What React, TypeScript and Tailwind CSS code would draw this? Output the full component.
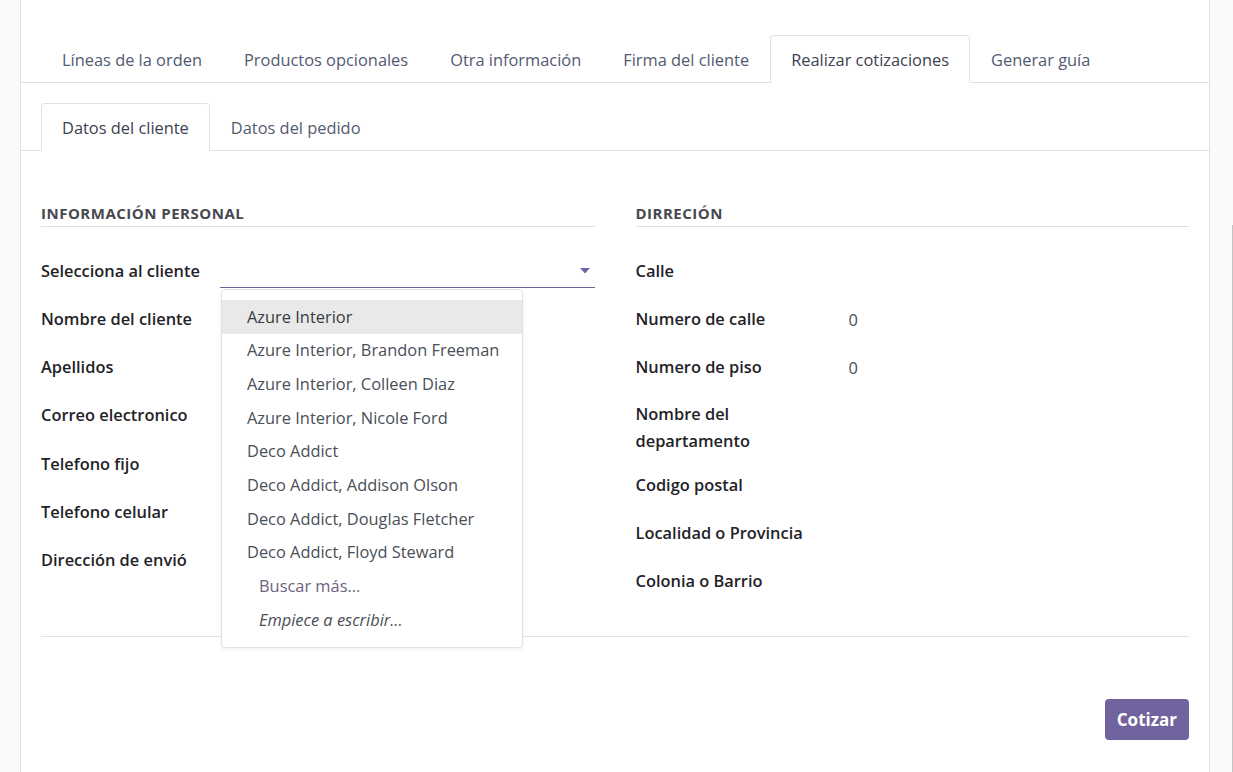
import { useState } from "react";

const topTabs = [
  "Líneas de la orden",
  "Productos opcionales",
  "Otra información",
  "Firma del cliente",
  "Realizar cotizaciones",
  "Generar guía",
];

const clientes = [
  "Azure Interior",
  "Azure Interior, Brandon Freeman",
  "Azure Interior, Colleen Diaz",
  "Azure Interior, Nicole Ford",
  "Deco Addict",
  "Deco Addict, Addison Olson",
  "Deco Addict, Douglas Fletcher",
  "Deco Addict, Floyd Steward",
];

const personales = [
  "Nombre del cliente",
  "Apellidos",
  "Correo electronico",
  "Telefono fijo",
  "Telefono celular",
  "Dirección de envió",
];

function Label({ children }: { children: React.ReactNode }) {
  return <span className="font-semibold text-[#1f2328] leading-[27px]">{children}</span>;
}

export default function App() {
  const [activeTop] = useState(4);

  return (
    <div
      className="flex h-[772px] w-full overflow-hidden bg-[#f9fafb] text-[16.4px]"
      style={{ fontFamily: "'Open Sans', 'Noto Sans', sans-serif" }}
    >
      <div className="w-[20px] shrink-0" />

      <div className="flex w-[1190px] shrink-0 flex-col border-x border-[#dee2e6] bg-white pt-[35px]">
        {/* pestañas principales */}
        <ul className="flex border-b border-[#dee2e6] pl-[20px]">
          {topTabs.map((t, i) => (
            <li
              key={t}
              className={
                i === activeTop
                  ? "-mb-px flex h-[48px] items-center rounded-t-[4px] border border-[#dee2e6] border-b-white bg-white px-[20px] pt-[2px] text-[#3d4250]"
                  : "flex h-[47px] items-center border border-transparent px-[20px] pt-[3px] text-[#535a72]"
              }
            >
              {t}
            </li>
          ))}
        </ul>

        {/* sub pestañas */}
        <ul className="mt-[20px] flex border-b border-[#dee2e6] pl-[20px]">
          <li className="-mb-px flex h-[48px] items-center rounded-t-[4px] border border-[#dee2e6] border-b-white bg-white px-[20px] pt-[2px] text-[#3d4250]">
            Datos del cliente
          </li>
          <li className="flex h-[47px] items-center border border-transparent px-[20px] pt-[3px] text-[#535a72]">
            Datos del pedido
          </li>
        </ul>

        <div className="px-[20px] pt-[51px]">
          <div className="grid grid-cols-2 gap-[41px]">
            {/* columna izquierda */}
            <div>
              <h3 className="border-b border-[#dee2e6] pb-[2px] text-[15px] font-bold uppercase leading-[22px] tracking-[0.5px] text-[#46494f]">
                Información personal
              </h3>
              <div className="pt-[19px]">
                <div className="flex h-[48px] items-center">
                  <div className="w-[179px] shrink-0">
                    <Label>Selecciona al cliente</Label>
                  </div>
                  <div className="relative flex-1 self-start">
                    <div className="flex h-[42px] items-center justify-end border-b border-[#71639e] pr-[5px]">
                      <svg width="10" height="6" viewBox="0 0 10 6" className="mt-[8px]">
                        <path d="M0 0h10L5 5.5z" fill="#71639e" />
                      </svg>
                    </div>
                    <ul className="absolute left-px top-[43px] z-10 w-[302px] rounded-[4px] border border-[#dee2e6] bg-white py-[10px] text-[#4a4f57] shadow-[0_2px_4px_rgba(0,0,0,0.06)]">
                      {clientes.map((c, i) => (
                        <li
                          key={c}
                          className={
                            "flex h-[33.7px] items-center pl-[25px] " + (i === 0 ? "bg-[#e9e9e9] text-[#373b42]" : "")
                          }
                        >
                          {c}
                        </li>
                      ))}
                      <li className="flex h-[33.7px] items-center pl-[37px] text-[#6f6282]">Buscar más...</li>
                      <li className="flex h-[33.7px] items-center pl-[37px] italic text-[#4a4f57]">
                        Empiece a escribir...
                      </li>
                    </ul>
                  </div>
                </div>
                {personales.map((p) => (
                  <div key={p} className="flex h-[48.3px] items-center">
                    <Label>{p}</Label>
                  </div>
                ))}
              </div>
            </div>

            {/* columna derecha */}
            <div>
              <h3 className="border-b border-[#dee2e6] pb-[2px] text-[15px] font-bold uppercase leading-[22px] tracking-[0.5px] text-[#46494f]">
                Dirreción
              </h3>
              <div className="pt-[19px]">
                <div className="flex h-[48px] items-center">
                  <Label>Calle</Label>
                </div>
                <div className="flex h-[48px] items-center">
                  <div className="w-[213px]">
                    <Label>Numero de calle</Label>
                  </div>
                  <span className="mt-[4px] text-[#4a4f57]">0</span>
                </div>
                <div className="flex h-[48px] items-center">
                  <div className="w-[213px]">
                    <Label>Numero de piso</Label>
                  </div>
                  <span className="mt-[4px] text-[#4a4f57]">0</span>
                </div>
                <div className="flex h-[70px] items-start pt-[10px]">
                  <div className="w-[140px]">
                    <Label>Nombre del departamento</Label>
                  </div>
                </div>
                <div className="flex h-[48px] items-center">
                  <Label>Codigo postal</Label>
                </div>
                <div className="flex h-[48px] items-center">
                  <Label>Localidad o Provincia</Label>
                </div>
                <div className="flex h-[48px] items-center">
                  <Label>Colonia o Barrio</Label>
                </div>
              </div>
            </div>
          </div>

          <div className="mt-[32px] border-t border-[#dee2e6]" />

          <div className="mt-[62px] flex justify-end">
            <button className="h-[41px] rounded-[4px] bg-[#71639e] px-[12px] text-[17px] font-bold text-white">
              Cotizar
            </button>
          </div>
        </div>
      </div>

      <div className="flex flex-1 justify-end">
        <div className="mt-[225px] h-full w-px bg-[#c4c4c4]" />
      </div>
    </div>
  );
}
